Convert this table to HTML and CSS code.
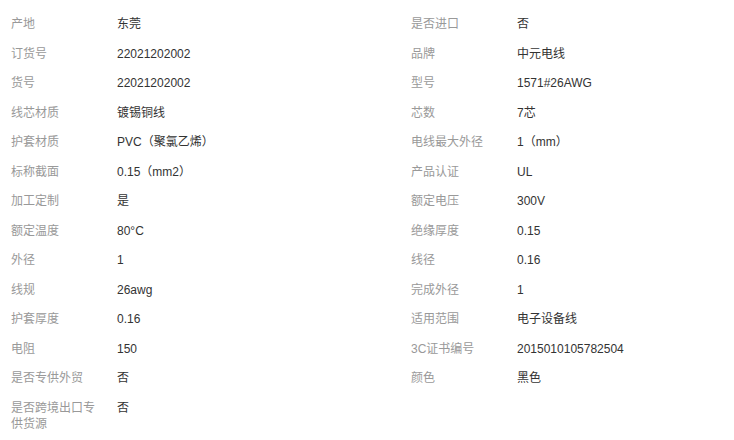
FILE: index.html
```html
<!DOCTYPE html>
<html lang="zh-CN">
<head>
    <meta charset="UTF-8">
    <meta name="viewport" content="width=device-width, initial-scale=1.0">
    <title>产品参数</title>
    <link rel="stylesheet" href="styles.css">
</head>
<body>
    <div class="attr-list">
        <div class="attr-item"><span class="attr-name">产地</span><span class="attr-value">东莞</span></div>
        <div class="attr-item"><span class="attr-name">是否进口</span><span class="attr-value">否</span></div>

        <div class="attr-item"><span class="attr-name">订货号</span><span class="attr-value">22021202002</span></div>
        <div class="attr-item"><span class="attr-name">品牌</span><span class="attr-value">中元电线</span></div>

        <div class="attr-item"><span class="attr-name">货号</span><span class="attr-value">22021202002</span></div>
        <div class="attr-item"><span class="attr-name">型号</span><span class="attr-value">1571#26AWG</span></div>

        <div class="attr-item"><span class="attr-name">线芯材质</span><span class="attr-value">镀锡铜线</span></div>
        <div class="attr-item"><span class="attr-name">芯数</span><span class="attr-value">7芯</span></div>

        <div class="attr-item"><span class="attr-name">护套材质</span><span class="attr-value">PVC（聚氯乙烯）</span></div>
        <div class="attr-item"><span class="attr-name">电线最大外径</span><span class="attr-value">1（mm）</span></div>

        <div class="attr-item"><span class="attr-name">标称截面</span><span class="attr-value">0.15（mm2）</span></div>
        <div class="attr-item"><span class="attr-name">产品认证</span><span class="attr-value">UL</span></div>

        <div class="attr-item"><span class="attr-name">加工定制</span><span class="attr-value">是</span></div>
        <div class="attr-item"><span class="attr-name">额定电压</span><span class="attr-value">300V</span></div>

        <div class="attr-item"><span class="attr-name">额定温度</span><span class="attr-value">80°C</span></div>
        <div class="attr-item"><span class="attr-name">绝缘厚度</span><span class="attr-value">0.15</span></div>

        <div class="attr-item"><span class="attr-name">外径</span><span class="attr-value">1</span></div>
        <div class="attr-item"><span class="attr-name">线径</span><span class="attr-value">0.16</span></div>

        <div class="attr-item"><span class="attr-name">线规</span><span class="attr-value">26awg</span></div>
        <div class="attr-item"><span class="attr-name">完成外径</span><span class="attr-value">1</span></div>

        <div class="attr-item"><span class="attr-name">护套厚度</span><span class="attr-value">0.16</span></div>
        <div class="attr-item"><span class="attr-name">适用范围</span><span class="attr-value">电子设备线</span></div>

        <div class="attr-item"><span class="attr-name">电阻</span><span class="attr-value">150</span></div>
        <div class="attr-item"><span class="attr-name">3C证书编号</span><span class="attr-value">2015010105782504</span></div>

        <div class="attr-item"><span class="attr-name">是否专供外贸</span><span class="attr-value">否</span></div>
        <div class="attr-item"><span class="attr-name">颜色</span><span class="attr-value">黑色</span></div>

        <div class="attr-item"><span class="attr-name">是否跨境出口专供货源</span><span class="attr-value">否</span></div>
    </div>
</body>
</html>
```

FILE: styles.css
```css
body {
    margin: 0;
    padding: 0;
    background-color: #ffffff;
    font-family: "Liberation Sans", Arial, "Noto Sans CJK SC", sans-serif;
    font-size: 12px;
}

.attr-list {
    display: grid;
    grid-template-columns: 400px 1fr;
    padding-top: 9.5px;
}

.attr-item {
    display: flex;
    align-items: flex-start;
    padding: 6.75px 0 6.75px 11px;
    line-height: 16px;
}

.attr-name {
    flex: none;
    width: 88px;
    margin-right: 18px;
    color: #999999;
}

.attr-value {
    color: #333333;
}
```
